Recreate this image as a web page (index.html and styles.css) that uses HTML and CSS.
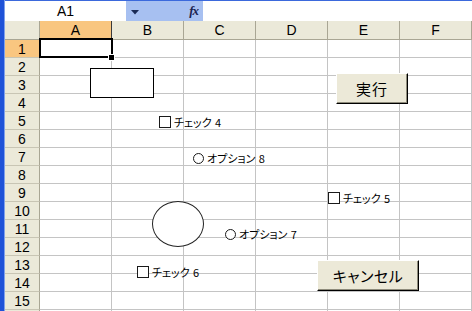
FILE: index.html
```html
<!DOCTYPE html>
<html lang="ja">
<head>
<meta charset="utf-8">
<title>Sheet</title>
<link rel="stylesheet" href="styles.css">
</head>
<body>
<div class="app">
  <div class="formula-bar">
    <div class="name-box">A1</div>
    <div class="tools">
      <span class="drop"><svg width="8" height="5" viewBox="0 0 8 5"><path d="M0 0h8L4 4.5z" fill="#1a2a55"/></svg></span>
      <span class="fx">fx</span>
    </div>
    <div class="formula"></div>
  </div>
  <div class="sheet">
    <div class="grid">
      <div class="corner"></div>
      <div class="colh sel dark">A</div>
      <div class="colh">B</div>
      <div class="colh">C</div>
      <div class="colh">D</div>
      <div class="colh">E</div>
      <div class="colh last">F</div>

      <div class="rowh sel">1</div><div class="c"></div><div class="c"></div><div class="c"></div><div class="c"></div><div class="c"></div><div class="c"></div>
      <div class="rowh">2</div><div class="c"></div><div class="c"></div><div class="c"></div><div class="c"></div><div class="c"></div><div class="c"></div>
      <div class="rowh">3</div><div class="c"></div><div class="c"></div><div class="c"></div><div class="c"></div><div class="c"></div><div class="c"></div>
      <div class="rowh">4</div><div class="c"></div><div class="c"></div><div class="c"></div><div class="c"></div><div class="c"></div><div class="c"></div>
      <div class="rowh">5</div><div class="c"></div><div class="c"></div><div class="c"></div><div class="c"></div><div class="c"></div><div class="c"></div>
      <div class="rowh">6</div><div class="c"></div><div class="c"></div><div class="c"></div><div class="c"></div><div class="c"></div><div class="c"></div>
      <div class="rowh">7</div><div class="c"></div><div class="c"></div><div class="c"></div><div class="c"></div><div class="c"></div><div class="c"></div>
      <div class="rowh">8</div><div class="c"></div><div class="c"></div><div class="c"></div><div class="c"></div><div class="c"></div><div class="c"></div>
      <div class="rowh">9</div><div class="c"></div><div class="c"></div><div class="c"></div><div class="c"></div><div class="c"></div><div class="c"></div>
      <div class="rowh">10</div><div class="c"></div><div class="c"></div><div class="c"></div><div class="c"></div><div class="c"></div><div class="c"></div>
      <div class="rowh">11</div><div class="c"></div><div class="c"></div><div class="c"></div><div class="c"></div><div class="c"></div><div class="c"></div>
      <div class="rowh">12</div><div class="c"></div><div class="c"></div><div class="c"></div><div class="c"></div><div class="c"></div><div class="c"></div>
      <div class="rowh">13</div><div class="c"></div><div class="c"></div><div class="c"></div><div class="c"></div><div class="c"></div><div class="c"></div>
      <div class="rowh">14</div><div class="c"></div><div class="c"></div><div class="c"></div><div class="c"></div><div class="c"></div><div class="c"></div>
      <div class="rowh">15</div><div class="c"></div><div class="c"></div><div class="c"></div><div class="c"></div><div class="c"></div><div class="c"></div>
      <div class="rowh"></div><div class="c"></div><div class="c"></div><div class="c"></div><div class="c"></div><div class="c"></div><div class="c"></div>
    </div>

    <div class="selection"></div>
    <div class="handle"></div>

    <div class="shape rect"></div>
    <div class="shape ellipse"></div>

    <label class="ctl chk4"><span class="box"></span>チェック 4</label>
    <label class="ctl chk5"><span class="box"></span>チェック 5</label>
    <label class="ctl chk6"><span class="box"></span>チェック 6</label>
    <label class="ctl opt8"><span class="radio"></span>オプション 8</label>
    <label class="ctl opt7"><span class="radio"></span>オプション 7</label>

    <button class="btn btn-run">実行</button>
    <button class="btn btn-cancel">キャンセル</button>
  </div>
</div>
</body>
</html>
```

FILE: styles.css
```css
html, body {
  margin: 0;
  padding: 0;
  background: #fff;
  overflow: hidden;
}
.app {
  width: 472px;
  height: 311px;
  box-sizing: border-box;
  border-left: 4px solid #1f52d8;
  padding-left: 1px;
  background: #7fa0ea;
  background-clip: padding-box;
  overflow: hidden;
  font-family: "Liberation Sans", Arial, sans-serif;
}
.formula-bar {
  display: flex;
  height: 21px;
  box-sizing: border-box;
  border-top: 1px solid #3b69dc;
  background: #fff;
}
.name-box {
  width: 121px;
  display: flex;
  align-items: center;
  justify-content: center;
  font-size: 14px;
  color: #000;
}
.tools {
  width: 77px;
  background: #a7c0f1;
  display: flex;
  align-items: center;
  justify-content: space-between;
  padding: 0 3px 0 5px;
  box-sizing: border-box;
}
.drop {
  display: flex;
  margin-top: 2px;
}
.fx {
  font-family: "Liberation Serif", serif;
  font-style: italic;
  font-weight: bold;
  font-size: 13px;
  color: #1c2450;
  margin-right: 2px;
  letter-spacing: -1px;
}
.formula {
  flex: 1;
  background: #fff;
}
.sheet {
  position: relative;
  background: #fff;
}
.grid {
  display: grid;
  grid-template-columns: 35px repeat(6, 72px);
  grid-template-rows: 19px repeat(16, 18px);
}
.grid > div {
  box-sizing: border-box;
}
.corner {
  background: #ebe9d9;
  border-right: 1px solid #a9a694;
  border-bottom: 1px solid #a9a694;
}
.colh {
  background: #ebe9d9;
  border-right: 1px solid #a9a694;
  border-bottom: 1px solid #a9a694;
  display: flex;
  align-items: center;
  justify-content: center;
  font-size: 14px;
  color: #000;
}
.colh.sel, .rowh.sel {
  background: #f9c680;
}
.colh.dark {
  border-right-color: #3a3a3a;
}
.rowh {
  background: #ebe9d9;
  border-right: 1px solid #a9a694;
  border-bottom: 1px solid #c8c5b4;
  display: flex;
  align-items: center;
  justify-content: center;
  font-size: 14px;
  color: #000;
}
.c {
  border-right: 1px solid #c4c4c4;
  border-bottom: 1px solid #c4c4c4;
}

/* selection of A1 */
.selection {
  position: absolute;
  left: 34px;
  top: 17px;
  width: 74px;
  height: 20px;
  box-sizing: border-box;
  border: 2px solid #000;
  pointer-events: none;
}
.handle {
  position: absolute;
  left: 103px;
  top: 33px;
  width: 7px;
  height: 7px;
  box-sizing: border-box;
  background: #000;
  border: 1px solid #fff;
}

/* drawn shapes */
.shape {
  position: absolute;
  box-sizing: border-box;
  border: 1px solid #000;
  background: #fff;
}
.rect {
  left: 85px;
  top: 47px;
  width: 64px;
  height: 30px;
}
.ellipse {
  left: 147px;
  top: 180px;
  width: 52px;
  height: 46px;
  border-radius: 50%;
  border-color: #222;
}

/* form controls */
.ctl {
  position: absolute;
  display: flex;
  align-items: center;
  gap: 2px;
  height: 14px;
  font-family: "Noto Sans CJK JP", "Liberation Sans", sans-serif;
  font-feature-settings: "palt";
  font-size: 11px;
  line-height: 14px;
  word-spacing: 1px;
  color: #000;
  white-space: pre;
}
.box {
  width: 12px;
  height: 12px;
  box-sizing: border-box;
  border: 1px solid #1a1a1a;
  background: #fff;
  margin-right: 1px;
}
.radio {
  width: 11px;
  height: 11px;
  box-sizing: border-box;
  border: 1px solid #1a1a1a;
  border-radius: 50%;
  background: #fff;
  margin-right: 1px;
}
.chk4 { left: 154px; top: 94px; }
.chk5 { left: 323px; top: 170px; }
.chk6 { left: 132px; top: 244px; }
.opt8 { left: 188px; top: 130px; }
.opt7 { left: 220px; top: 206px; }

.btn {
  position: absolute;
  box-sizing: border-box;
  margin: 0;
  padding: 0;
  background: #ece9d8;
  border: 1px solid;
  border-color: #fff #000 #000 #fff;
  box-shadow: inset -1px -1px 0 #8e8b7b;
  font-family: "Noto Sans CJK JP", "Liberation Sans", sans-serif;
  font-feature-settings: "palt";
  font-size: 15px;
  color: #000;
  display: flex;
  align-items: center;
  justify-content: center;
}
.btn-run {
  left: 331px;
  top: 52px;
  width: 72px;
  height: 31px;
  letter-spacing: 1px;
}
.btn-cancel {
  left: 312px;
  top: 239px;
  width: 102px;
  height: 31px;
  letter-spacing: 0.5px;
}
```
